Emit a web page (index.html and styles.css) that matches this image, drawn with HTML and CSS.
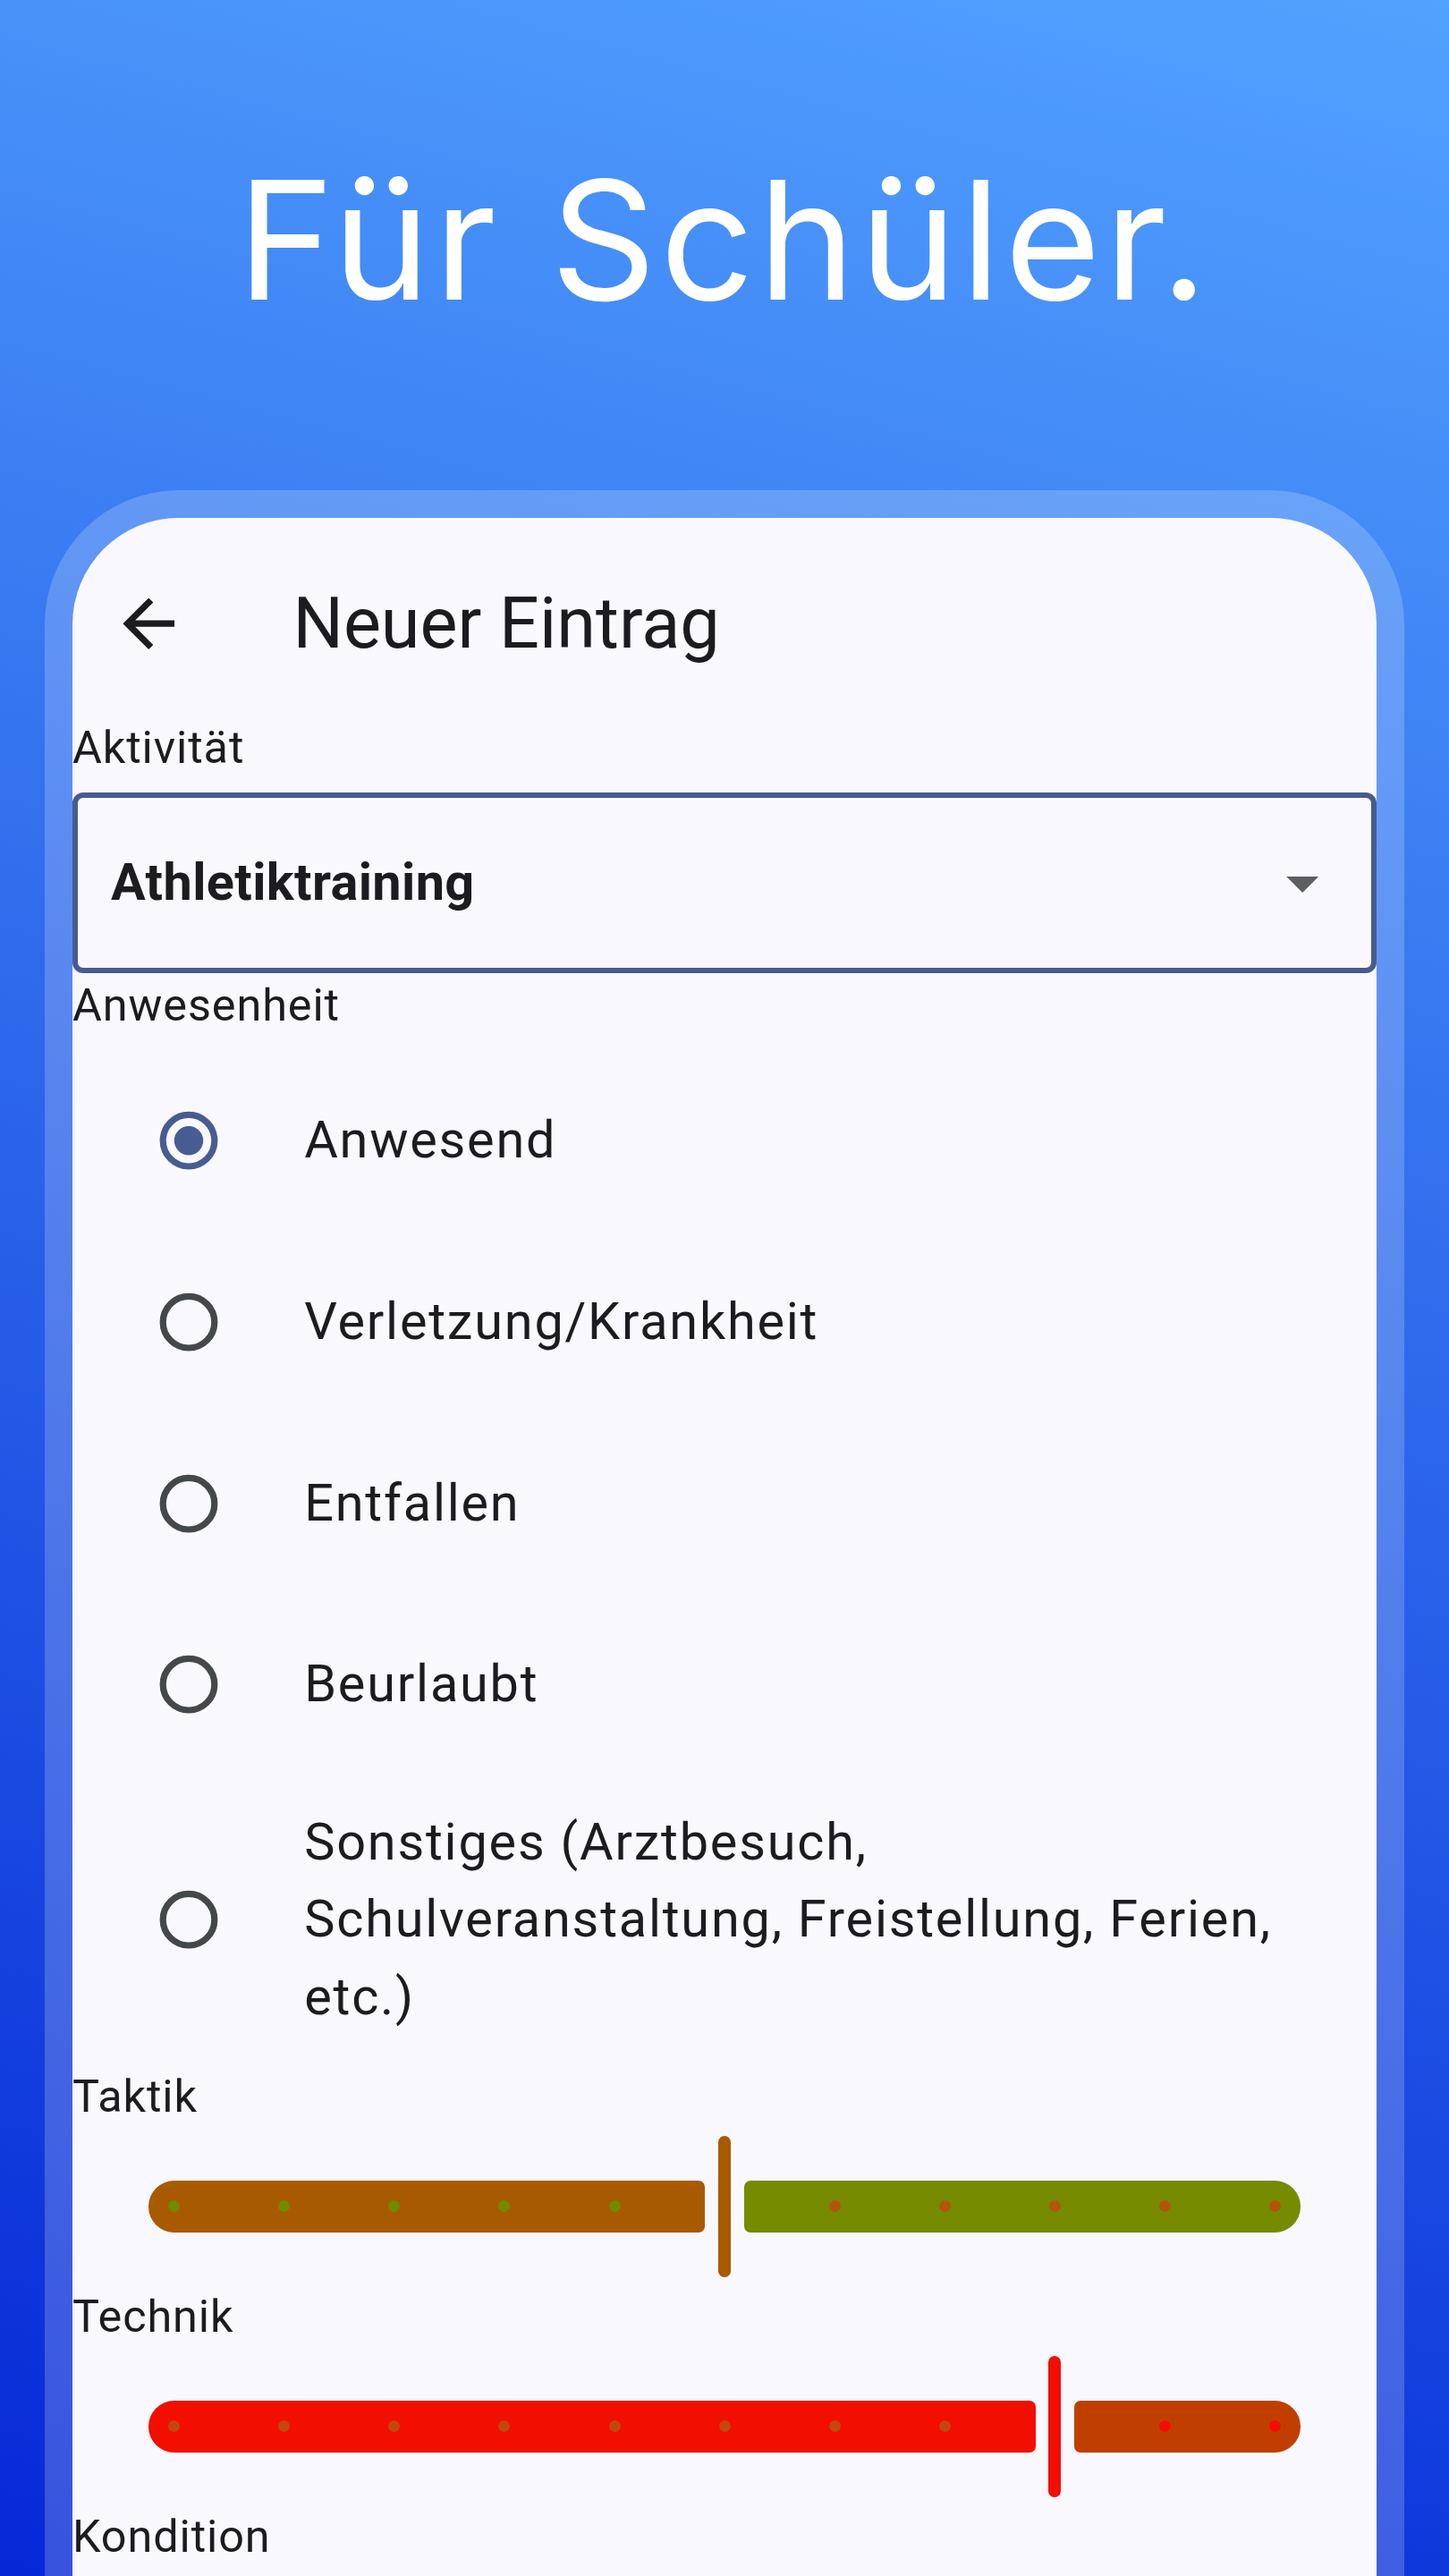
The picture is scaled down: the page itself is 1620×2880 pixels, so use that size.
FILE: index.html
```html
<!DOCTYPE html>
<html lang="de">
<head>
<meta charset="utf-8">
<title>Für Schüler.</title>
<link rel="stylesheet" href="styles.css">
</head>
<body>
<header class="hero">
  <h1 class="hero-title">Für Schüler.</h1>
</header>
<div class="device">
  <div class="screen">
    <div class="appbar">
      <svg class="appbar-back" viewBox="0 0 24 24" aria-hidden="true"><path d="M20 11H7.83l5.59-5.59L12 4l-8 8 8 8 1.41-1.41L7.83 13H20v-2z"/></svg>
      <span class="appbar-title">Neuer Eintrag</span>
    </div>

    <div class="field-label">Aktivität</div>
    <div class="dropdown">
      <span class="dropdown-value">Athletiktraining</span>
      <svg class="dropdown-icon" viewBox="0 0 24 24" aria-hidden="true"><path d="M7 10l5 5 5-5z"/></svg>
    </div>

    <div class="field-label">Anwesenheit</div>
    <div class="radio-list">
      <div class="radio-tile is-selected">
        <svg class="radio" viewBox="0 8 40 24"><circle class="radio-ring" cx="20" cy="20" r="8"/><circle class="radio-dot" cx="20" cy="20" r="4.5"/></svg>
        <span class="radio-text">Anwesend</span>
      </div>
      <div class="radio-tile">
        <svg class="radio" viewBox="0 8 40 24"><circle class="radio-ring" cx="20" cy="20" r="8"/></svg>
        <span class="radio-text">Verletzung/Krankheit</span>
      </div>
      <div class="radio-tile">
        <svg class="radio" viewBox="0 8 40 24"><circle class="radio-ring" cx="20" cy="20" r="8"/></svg>
        <span class="radio-text">Entfallen</span>
      </div>
      <div class="radio-tile">
        <svg class="radio" viewBox="0 8 40 24"><circle class="radio-ring" cx="20" cy="20" r="8"/></svg>
        <span class="radio-text">Beurlaubt</span>
      </div>
      <div class="radio-tile">
        <svg class="radio" viewBox="0 8 40 24"><circle class="radio-ring" cx="20" cy="20" r="8"/></svg>
        <span class="radio-text">Sonstiges (Arztbesuch, Schulveranstaltung, Freistellung, Ferien, etc.)</span>
      </div>
    </div>

    <div class="field-label field-label-slider">Taktik</div>
    <div class="slider slider-taktik">
      <div class="slider-row">
        <span class="seg seg-active" style="width:622.4px"></span>
        <span class="thumb"></span>
        <span class="seg seg-inactive"></span>
        <span class="tick tick-on" style="left:28.8px"></span>
        <span class="tick tick-on" style="left:151.8px"></span>
        <span class="tick tick-on" style="left:274.9px"></span>
        <span class="tick tick-on" style="left:397.9px"></span>
        <span class="tick tick-on" style="left:521px"></span>
        <span class="tick tick-off" style="left:767.0px"></span>
        <span class="tick tick-off" style="left:890.1px"></span>
        <span class="tick tick-off" style="left:1013.1px"></span>
        <span class="tick tick-off" style="left:1136.2px"></span>
        <span class="tick tick-off" style="left:1259.2px"></span>
      </div>
    </div>

    <div class="field-label field-label-slider">Technik</div>
    <div class="slider slider-technik">
      <div class="slider-row">
        <span class="seg seg-active" style="width:991.5px"></span>
        <span class="thumb"></span>
        <span class="seg seg-inactive"></span>
        <span class="tick tick-on" style="left:28.8px"></span>
        <span class="tick tick-on" style="left:151.8px"></span>
        <span class="tick tick-on" style="left:274.9px"></span>
        <span class="tick tick-on" style="left:397.9px"></span>
        <span class="tick tick-on" style="left:521px"></span>
        <span class="tick tick-on" style="left:644px"></span>
        <span class="tick tick-on" style="left:767.0px"></span>
        <span class="tick tick-on" style="left:890.1px"></span>
        <span class="tick tick-off" style="left:1136.2px"></span>
        <span class="tick tick-off" style="left:1259.2px"></span>
      </div>
    </div>

    <div class="field-label field-label-slider">Kondition</div>
    <div class="slider slider-kondition">
      <div class="slider-row">
        <span class="seg seg-active" style="width:253.3px"></span>
        <span class="thumb"></span>
        <span class="seg seg-inactive"></span>
        <span class="tick tick-on" style="left:28.8px"></span>
        <span class="tick tick-off" style="left:397.9px"></span>
        <span class="tick tick-off" style="left:521px"></span>
        <span class="tick tick-off" style="left:644px"></span>
        <span class="tick tick-off" style="left:767.0px"></span>
        <span class="tick tick-off" style="left:890.1px"></span>
        <span class="tick tick-off" style="left:1013.1px"></span>
        <span class="tick tick-off" style="left:1136.2px"></span>
        <span class="tick tick-off" style="left:1259.2px"></span>
      </div>
    </div>
  </div>
</div>
</body>
</html>
```

FILE: styles.css
```css
* { box-sizing: border-box; }

html, body {
  margin: 0;
  padding: 0;
}

body {
  width: 1620px;
  height: 2880px;
  overflow: hidden;
  background: linear-gradient(195deg, #52a2ff 0%, #0528d6 100%);
  font-family: Roboto, "Noto Sans", sans-serif;
  color: #1b1b21;
}

/* ---------- hero ---------- */
.hero {
  height: 548px;
  padding-top: 176px;
}

.hero-title {
  margin: 0;
  font-family: Inter, "Open Sans", sans-serif;
  font-weight: 400;
  font-size: 184px;
  line-height: 184px;
  color: #ffffff;
  text-align: center;
  letter-spacing: 4.5px;
}

/* ---------- device frame ---------- */
.device {
  margin: 0 50px;
  padding: 31px 31px 0;
  border-radius: 150px 150px 0 0;
  background: rgba(255, 255, 255, 0.2);
  height: 2600px;
}

.screen {
  height: 100%;
  border-radius: 119px 119px 0 0;
  background: #f9f8fe;
  overflow: hidden;
}

/* ---------- app bar ---------- */
.appbar {
  height: 221px;
  padding: 15px 0 0 42px;
  display: flex;
  align-items: center;
  gap: 118px;
}

.appbar-back {
  width: 86.4px;
  height: 86.4px;
  fill: #1b1b21;
  flex: none;
}

.appbar-title {
  font-size: 79.2px;
  line-height: 100px;
  font-weight: 400;
  color: #1b1b21;
}

/* ---------- labels ---------- */
.field-label {
  font-size: 50.4px;
  line-height: 72px;
  letter-spacing: 0.9px;
  padding-bottom: 14.4px;
  color: #1b1b21;
}

.field-label-slider {
  padding-bottom: 0;
}

/* ---------- dropdown ---------- */
.dropdown {
  height: 201.6px;
  border: 6px solid #485b8f;
  border-radius: 12px;
  display: flex;
  align-items: center;
  justify-content: space-between;
  padding: 0 34px 0 37px;
}

.dropdown-value {
  font-size: 57.6px;
  line-height: 86.4px;
  font-weight: 700;
  letter-spacing: 0.4px;
  color: #1b1b21;
}

.dropdown-icon {
  width: 86.4px;
  height: 86.4px;
  fill: #5d5e63;
  flex: none;
}

/* ---------- radio list ---------- */
.radio-list {
  display: flex;
  flex-direction: column;
}

.radio-tile {
  min-height: 202.6px;
  padding: 32px 57.6px;
  display: flex;
  align-items: center;
  gap: 57.6px;
}

.radio {
  width: 144px;
  height: 86.4px;
  flex: none;
  overflow: visible;
}

.radio-ring {
  fill: none;
  stroke: #44474e;
  stroke-width: 2;
}

.radio-dot {
  fill: #475d92;
}

.radio-tile.is-selected .radio-ring {
  stroke: #475d92;
}

.radio-text {
  font-size: 57.6px;
  line-height: 86.4px;
  letter-spacing: 1.8px;
  color: #1b1b21;
}

/* ---------- sliders ---------- */
.slider {
  height: 174px;
  padding: 0 85px;
  display: flex;
  align-items: center;
}

.slider-row {
  position: relative;
  flex: 1;
  height: 158.4px;
  display: flex;
  align-items: center;
  gap: 14.4px;
}

.seg {
  height: 57.6px;
  flex: none;
}

.seg-active {
  border-radius: 28.8px 7px 7px 28.8px;
  background: var(--active);
}

.seg-inactive {
  flex: 1;
  border-radius: 7px 28.8px 28.8px 7px;
  background: var(--inactive);
}

.thumb {
  width: 14.4px;
  height: 158.4px;
  border-radius: 7.2px;
  background: var(--active);
  flex: none;
}

.tick {
  position: absolute;
  top: 50%;
  width: 13px;
  height: 13px;
  margin: -6.5px 0 0 -6.5px;
  border-radius: 50%;
}

.tick-on { background: var(--tick-on); }
.tick-off { background: var(--tick-off); }

.slider-taktik {
  --active: #a85a00;
  --inactive: #768b00;
  --tick-on: #6f8c00;
  --tick-off: #b3560a;
}

.slider-technik {
  --active: #f20e00;
  --inactive: #c03f00;
  --tick-on: #c2480f;
  --tick-off: #f20e00;
}

.slider-kondition {
  --active: #62a000;
  --inactive: #8a9400;
  --tick-on: #7a9200;
  --tick-off: #6aa000;
}
```
